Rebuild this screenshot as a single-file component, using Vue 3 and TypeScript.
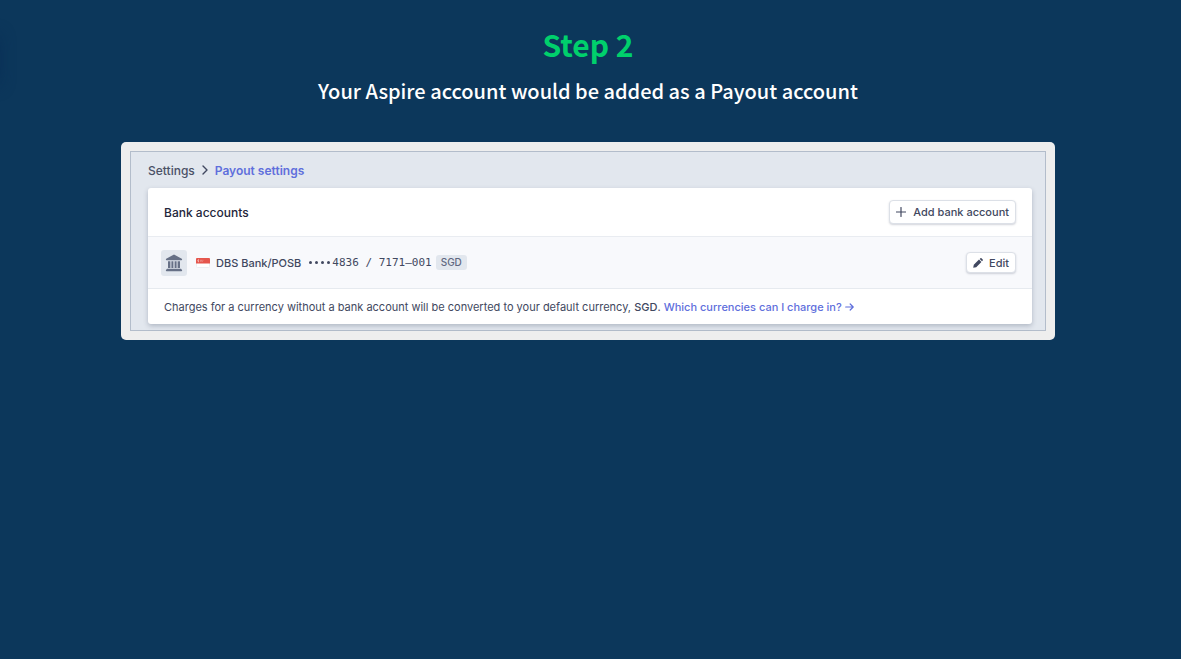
<script setup lang="ts">
interface Account {
  bank: string
  number: string
  currency: string
}

const accounts: Account[] = [
  { bank: 'DBS Bank/POSB', number: '4836 / 7171–001', currency: 'SGD' },
]
</script>

<template>
  <main class="page">
    <div class="edge-glow" aria-hidden="true"></div>
    <h1 class="title">Step 2</h1>
    <p class="subtitle">Your Aspire account would be added as a Payout account</p>

    <div class="frame">
      <section class="screen">
        <nav class="crumbs" aria-label="Breadcrumb">
          <a href="#settings" class="crumb">Settings</a>
          <svg class="chevron" viewBox="0 0 8 10" aria-hidden="true">
            <path d="M2 1l4 4-4 4" fill="none" stroke="currentColor" stroke-width="1.4" stroke-linecap="round" stroke-linejoin="round" />
          </svg>
          <a href="#payout" class="crumb current" aria-current="page">Payout settings</a>
        </nav>

        <div class="card">
          <header class="card-head">
            <h2 class="card-title">Bank accounts</h2>
            <button type="button" class="btn">
              <svg class="plus" viewBox="0 0 10 10" aria-hidden="true">
                <path d="M5 .5v9M.5 5h9" fill="none" stroke="currentColor" stroke-width="1.2" stroke-linecap="round" />
              </svg>
              <span>Add bank account</span>
            </button>
          </header>

          <div v-for="account in accounts" :key="account.number" class="row">
            <span class="bank-icon">
              <svg viewBox="0 0 18 18" aria-hidden="true">
                <path
                  fill="currentColor"
                  d="M9 .6l7.800 4.200c.6.4.4 1.400-.3 1.400h-15c-.7 0-.9-1-.3-1.400zM3 7.200h2.400V14H3zM6.400 7.200h2V14h-2zM9.600 7.200h2V14h-2zM12.600 7.200H15V14h-2.400zM2 14.800h14l1 1.200c.4.600 0 1.200-.5 1.200h-15c-.5 0-.9-.6-.5-1.200z"
                />
              </svg>
            </span>
            <svg class="flag" viewBox="0 0 14 10" aria-hidden="true">
              <rect x=".5" y=".5" width="13" height="9" rx="1" fill="#fff" stroke="#eceef2" />
              <path d="M1 0h12a1 1 0 0 1 1 1v4.500H0V1a1 1 0 0 1 1-1z" fill="#e5564d" />
              <path d="M2.800 1.400a1.500 1.500 0 0 0 0 2.600" fill="none" stroke="#fff" stroke-width=".8" />
              <path d="M4 2.300h.7M5.300 2.300H6M6.600 2.300h.7M4.500 3.400h.7M5.800 3.400h.7" stroke="#f7c4c0" stroke-width=".7" />
            </svg>
            <span class="bank-name">{{ account.bank }}</span>
            <span class="number">
              <span class="dots" aria-hidden="true"><i v-for="n in 4" :key="n"></i></span>{{ account.number }}
            </span>
            <span class="tag">{{ account.currency }}</span>
            <button type="button" class="btn edit">
              <svg class="pencil" viewBox="0 0 10 10" aria-hidden="true">
                <path fill="currentColor" d="M.2 9.800l.6-3L6 1.600l2.400 2.400-5.200 5.200zM6.700 1l.7-.7a.8.8 0 0 1 1.100 0l1.200 1.200a.8.8 0 0 1 0 1.100L9 3.300z" />
              </svg>
              <span>Edit</span>
            </button>
          </div>

          <p class="note">
            Charges for a currency without a bank account will be converted to your default currency, <strong>SGD</strong>.
            <a href="#currencies">Which currencies can I charge in?
              <svg class="arrow" viewBox="0 0 9 8" aria-hidden="true">
                <path d="M.7 4h7.500M5.200 1l3 3-3 3" fill="none" stroke="currentColor" stroke-width="1.200" stroke-linecap="round" stroke-linejoin="round" />
              </svg></a>
          </p>
        </div>
      </section>
    </div>
  </main>
</template>

<style>
html,
body {
  background: #0c375b;
}
</style>

<style scoped>
.page {
  position: relative;
  box-sizing: border-box;
  min-height: 100vh;
  overflow: hidden;
  padding: 22px 126px 24px 121px;
  background: #0c375b;
  font-family: 'Noto Sans CJK SC', sans-serif;
  text-align: center;
}

.edge-glow {
  position: absolute;
  top: 36px;
  left: -22px;
  width: 20px;
  height: 48px;
  box-shadow: 0 0 16px #082d56;
}

.title {
  margin: 0;
  color: #00d06c;
  font-size: 30px;
  font-weight: 700;
  line-height: 44px;
}

.subtitle {
  margin: 9px 0 35px;
  color: #fff;
  font-size: 20px;
  font-weight: 500;
  line-height: 32px;
}

.frame {
  padding: 9px;
  border-radius: 5px;
  background: #eee;
}

.screen {
  padding: 9px 13px 6px 17px;
  border: 1px solid #b3bdcb;
  background: #e2e7ee;
  color: #414860;
  font-family: Inter, sans-serif;
  font-size: 11px;
  text-align: left;
}

.crumbs {
  display: flex;
  align-items: center;
  gap: 6px;
  height: 18px;
  margin-bottom: 9px;
  font-size: 12px;
}

.crumb {
  color: #4a5166;
  font-weight: 500;
  text-decoration: none;
}

.current {
  color: #5f6fdc;
  font-weight: 600;
}

.chevron {
  width: 8px;
  height: 10px;
}

.card {
  border-radius: 3px;
  background: #fff;
  box-shadow: 0 2px 5px rgba(50, 65, 90, 0.28);
}

.card-head {
  display: flex;
  align-items: center;
  justify-content: space-between;
  height: 48px;
  padding: 0 16px;
}

.card-title {
  margin: 0;
  color: #23263b;
  font-size: 12px;
  font-weight: 500;
}

.btn {
  display: flex;
  align-items: center;
  gap: 7px;
  height: 24px;
  padding: 0 6px;
  border: 1px solid #dce0e7;
  border-radius: 4px;
  background: #fff;
  box-shadow: 0 1px 2px rgba(50, 60, 90, 0.22);
  color: #414860;
  font: 500 11px Inter, sans-serif;
  white-space: nowrap;
}

.plus {
  width: 10px;
  height: 10px;
}

.edit {
  gap: 6px;
  height: 21px;
  margin-left: auto;
}

.pencil {
  width: 10px;
  height: 10px;
}

.row {
  display: flex;
  align-items: center;
  height: 51px;
  padding: 0 16px 0 13px;
  border-top: 1px solid #e9ecf1;
  border-bottom: 1px solid #e6eaef;
  background: #f8f9fc;
}

.bank-icon {
  display: grid;
  place-items: center;
  width: 26px;
  height: 26px;
  border-radius: 3px;
  background: #e2e7ee;
  color: #667086;
}

.bank-icon svg {
  width: 18px;
  height: 18px;
}

.flag {
  width: 14px;
  height: 10px;
  margin: 0 6px 0 9px;
}

.bank-name {
  font-weight: 500;
}

.number {
  display: flex;
  align-items: center;
  margin-left: 8px;
  font-family: 'DejaVu Sans Mono', monospace;
}

.dots {
  display: flex;
  gap: 3px;
  margin-right: 2px;
}

.dots i {
  width: 3px;
  height: 3px;
  border-radius: 50%;
  background: currentColor;
}

.tag {
  margin-left: 4px;
  padding: 0 5px;
  border-radius: 3px;
  background: #e2e7ee;
  color: #5f687f;
  font-size: 10px;
  font-weight: 500;
  line-height: 15px;
}

.note {
  margin: 0;
  padding: 10px 16px 9px;
  line-height: 16px;
}

.note strong {
  font-weight: 500;
}

.note a {
  color: #5f6fdc;
  font-weight: 500;
  text-decoration: none;
}

.arrow {
  width: 9px;
  height: 8px;
}
</style>
